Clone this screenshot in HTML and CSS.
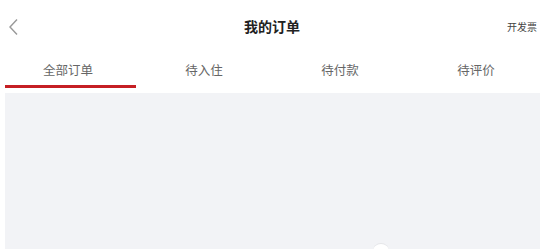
FILE: index.html
```html
<!DOCTYPE html>
<html lang="zh-CN">

<head>
    <meta charset="UTF-8">
    <meta name="viewport" content="width=device-width, initial-scale=1.0">
    <title>我的订单</title>
    <link rel="stylesheet" href="styles.css">
</head>

<body>
    <div class="page">
        <header class="nav-bar">
            <a href="#" class="back-btn">
                <svg width="12" height="18" viewBox="0 0 12 18">
                    <polyline points="9,1.5 2,9 9,16.5" fill="none" stroke="#999" stroke-width="1.4" />
                </svg>
            </a>
            <h1 class="nav-title">我的订单</h1>
            <a href="#" class="nav-action">开发票</a>
        </header>

        <nav class="tabs">
            <div class="tab active">全部订单</div>
            <div class="tab">待入住</div>
            <div class="tab">待付款</div>
            <div class="tab">待评价</div>
        </nav>

        <main class="order-list">
            <div class="empty-icon"></div>
        </main>
    </div>
</body>

</html>
```

FILE: styles.css
```css
* {
    margin: 0;
    padding: 0;
    box-sizing: border-box;
}

body {
    font-family: "Noto Sans CJK SC", "Noto Sans", sans-serif;
    background: #fff;
    height: 249px;
    overflow: hidden;
}

.page {
    display: flex;
    flex-direction: column;
    height: 100%;
}

.nav-bar {
    height: 52px;
    display: flex;
    align-items: center;
    justify-content: space-between;
    padding: 0 8px 0 8px;
    position: relative;
}

.back-btn {
    display: flex;
    align-items: center;
    width: 30px;
    height: 30px;
    padding-top: 1px;
}

.nav-title {
    position: absolute;
    left: 0;
    right: 0;
    text-align: center;
    font-size: 14px;
    font-weight: 700;
    color: #222;
    pointer-events: none;
}

.nav-action {
    font-size: 10px;
    color: #444;
    text-decoration: none;
    margin-right: -1px;
}

.tabs {
    display: flex;
    height: 36px;
}

.tab {
    flex: 1;
    position: relative;
    text-align: center;
    font-size: 12.5px;
    color: #666;
    line-height: 36px;
    padding-bottom: 2px;
}

.tab.active::after {
    content: '';
    position: absolute;
    left: 5px;
    right: 0;
    bottom: 0;
    height: 3px;
    background: #c51f24;
}

.order-list {
    flex: 1;
    margin: 5px 4px 0 5px;
    background: #f2f3f6;
    position: relative;
}

.empty-icon {
    position: absolute;
    left: 368px;
    top: 150px;
    width: 16px;
    height: 16px;
    border-radius: 50%;
    background: #fff;
    border-top: 1px solid #e4e5e8;
}
```
